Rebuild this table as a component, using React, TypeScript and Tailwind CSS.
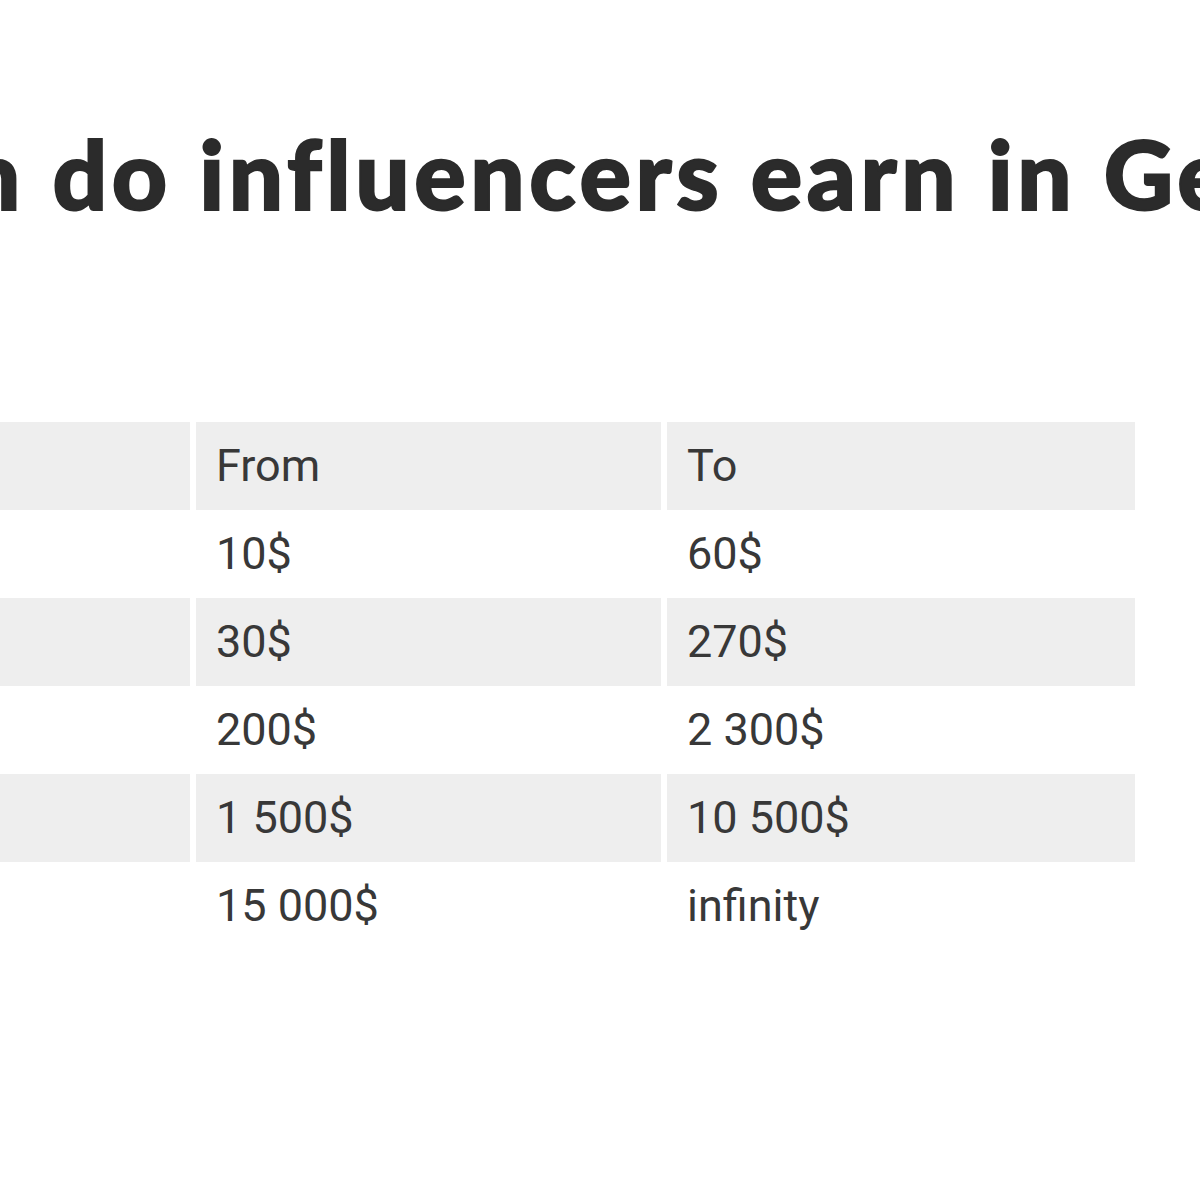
import React from "react";

const rows = [
  { label: "Nano", from: "10$", to: "60$" },
  { label: "Micro", from: "30$", to: "270$" },
  { label: "Mid", from: "200$", to: "2 300$" },
  { label: "Macro", from: "1 500$", to: "10 500$" },
  { label: "Mega", from: "15 000$", to: "infinity" },
];

const Row = ({ cells, shaded }: { cells: string[]; shaded: boolean }) => (
  <div className="grid grid-cols-[480px_465px_468px] gap-x-[6px] h-[88px]">
    {cells.map((c, i) => (
      <div
        key={i}
        className={`flex items-center pl-[20px] ${shaded ? "bg-[#eeeeee]" : "bg-white"}`}
      >
        {c}
      </div>
    ))}
  </div>
);

export default function App() {
  return (
    <div className="w-[1200px] h-[1200px] overflow-hidden bg-white">
      <h1
        className="mt-[125px] ml-[-474px] whitespace-nowrap text-[96px] leading-none font-black tracking-[4.6px] text-[#2b2b2b] [-webkit-text-stroke:2px_#2b2b2b]"
        style={{ fontFamily: "Lato, 'Noto Sans', sans-serif" }}
      >
        How much do influencers earn in Germany?
      </h1>

      <div
        className="mt-[201px] ml-[-290px] text-[45px] text-[#383838]"
        style={{ fontFamily: "Roboto, 'Liberation Sans', sans-serif" }}
      >
        <Row cells={["Followers", "From", "To"]} shaded />
        {rows.map((r, i) => (
          <Row key={r.label} cells={[r.label, r.from, r.to]} shaded={i % 2 === 1} />
        ))}
      </div>
    </div>
  );
}
